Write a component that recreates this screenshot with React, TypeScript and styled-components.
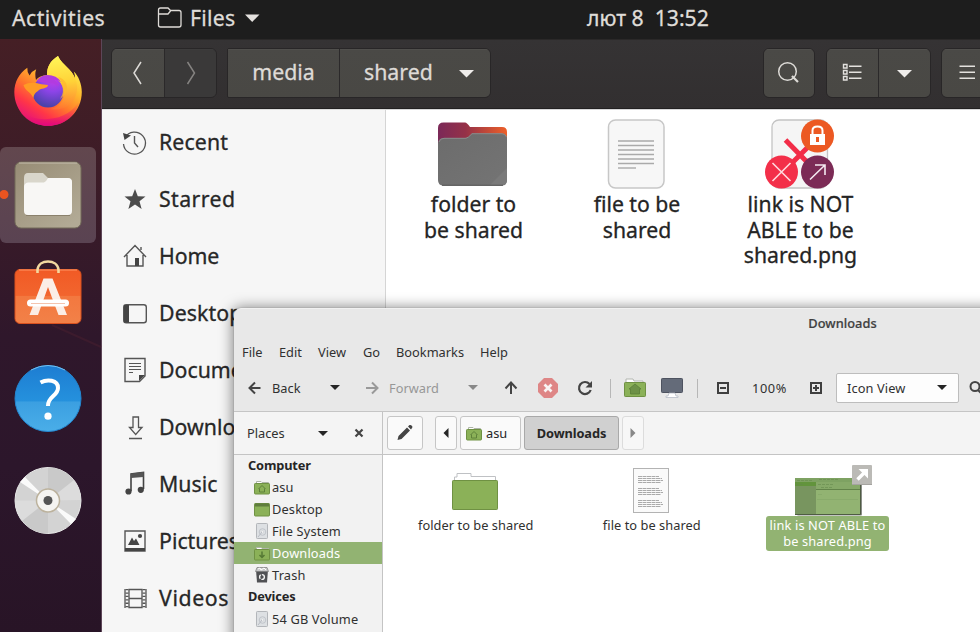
import React from "react";
import styled, { createGlobalStyle } from "styled-components";

const Global = createGlobalStyle`
  * { box-sizing: border-box; }
  body { margin: 0; overflow: hidden; font-family: "Noto Sans", "Open Sans", sans-serif; }
  svg { display: block; flex: none; overflow: visible; }
`;

const Screen = styled.div`
  width: 980px; height: 632px; overflow: hidden; position: relative;
  display: grid; grid-template-rows: 39px 1fr; background: #2b1628;
`;
const TopBar = styled.header`
  background: #1d1d1d; color: #dfdcd8; font-size: 21.2px; line-height: 37px;
  display: grid; grid-template-columns: 145px 33px 53px 344px 1fr; padding-left: 12px;
  white-space: nowrap; -webkit-text-stroke: .3px;
`;
const BarText = styled.span<{ $ls?: number }>`letter-spacing: ${p => p.$ls ?? 0}px; margin-top: -1px;`;
const Body = styled.div`display: grid; grid-template-columns: 102px 1fr; min-height: 0;`;
const Dock = styled.nav`
  display: flex; flex-direction: column; gap: 6px; padding-top: 6px;
  background: linear-gradient(180deg, #451f25 0%, #3d1c27 22%, #2f172b 50%, #2c162b 72%, #281426 100%);
  border-right: 1px solid #5d4658;
`;
const DockItem = styled.div<{ $active?: boolean }>`
  width: 96px; height: 96px; border-radius: 6px;
  background: ${p => (p.$active ? "linear-gradient(#62474e, #5a4352)" : "transparent")};
`;

const Files = styled.section`display: grid; grid-template-rows: 70px 1fr; min-width: 0;`;
const HeaderBar = styled.div`
  background: linear-gradient(#353334, #322f30); border-top: 1px solid #2a2828; border-bottom: 1px solid #222021;
  display: grid; grid-template-columns: 106px 10px 264px 272px 52px 11px 105px 10px 52px;
  padding: 8px 0 0 9px; align-items: start; overflow: hidden; min-width: 0;
`;
const Group = styled.div<{ $cols: string; $at: number; $flat?: boolean }>`
  display: grid; grid-template-columns: ${p => p.$cols}; height: 50px; grid-column: ${p => p.$at};
  border: 1px solid #282627; border-radius: ${p => (p.$flat ? "2px 6px 6px 2px" : "6px")}; overflow: hidden;
`;
const HeaderButton = styled.div<{ $dim?: boolean }>`
  display: flex; align-items: center; justify-content: center;
  background: ${p => (p.$dim ? "#3a3939" : "linear-gradient(#4a4946, #494844)")};
  box-shadow: inset 0 1px ${p => (p.$dim ? "#3d3c3c" : "#504f4c")};
  color: #dedbd7; font-size: 21.3px; line-height: 46px; -webkit-text-stroke: .3px;
  & + & { border-left: 1px solid #2b292a; }
`;
const PathText = styled.span`padding-bottom: 3px;`;
const SharedButton = styled(HeaderButton)`justify-content: space-between; padding: 0 16px 0 24px;`;
const FilesBody = styled.div`display: grid; grid-template-columns: 284px 1fr; min-height: 0;`;
const Places = styled.aside`background: #f6f6f6; border-right: 1px solid #d5d5d5; padding-top: 4px; border-top: 1px solid #ddd;`;
const Place = styled.div`
  height: 57px; display: grid; grid-template-columns: 40px 1fr; padding-left: 17px; align-items: center;
  font-size: 21.3px; line-height: 50px; color: #272727; white-space: nowrap; -webkit-text-stroke: .3px;
`;
const PlaceText = styled.span<{ $ls?: number }>`letter-spacing: ${p => p.$ls ?? 0}px; padding-bottom: 2px;`;
const FileGrid = styled.main`
  background: #fff; display: grid; grid-template-columns: repeat(3, 164px); padding: 5px 0 0 4px; align-items: start;
  border-top: 1px solid #d8d8d8;
`;
const File = styled.figure`margin: 0; display: flex; flex-direction: column; align-items: center;`;
const FileName = styled.figcaption<{ $pad?: number }>`
  font-size: 21.2px; line-height: 25.6px; text-align: center; color: #242424; white-space: pre; margin-top: -2px;
  padding-left: ${p => p.$pad ?? 0}px; -webkit-text-stroke: .3px;
`;

const Win = styled.section`
  position: absolute; left: 234px; top: 308px; width: 1217px; height: 500px; overflow: hidden;
  border-radius: 7px 0 0 0; background: #e8e8e8; box-shadow: 0 1px 14px 1px rgba(0,0,0,.5), 0 0 1px rgba(0,0,0,.5);
  display: grid; grid-template-rows: 30px 28px 45px 43px 1fr; font-size: 12.8px; color: #303030;
  border-top: 1px solid #f1f1f1;
`;
const Title = styled.div`text-align: center; font-weight: 500; line-height: 29px; color: #404040; letter-spacing: .05px; -webkit-text-stroke: .2px;`;
const Menu = styled.div`
  display: grid; grid-template-columns: 37px 39px 45px 33px 84px 50px; padding-left: 8px; line-height: 27px;
`;
const Tools = styled.div`
  display: grid; grid-template-columns: 38px 58px 32px 27px 79px 27px 125px 132px 52px 32px 129px 30px;
  align-items: center; border-bottom: 1px solid #c5c5c5; padding-bottom: 3px;
  & > svg { justify-self: start; }
`;
const ToolText = styled.span<{ $off?: boolean; $ls?: number }>`
  color: ${p => (p.$off ? "#979797" : "#303030")}; letter-spacing: ${p => p.$ls ?? 0}px; padding-top: 1px;
`;
const Select = styled.div`
  width: 123px; height: 30px; background: #fdfdfd; border: 1px solid #bdbdbd; border-radius: 2px;
  display: flex; align-items: center; justify-content: space-between; padding: 0 11px 0 10px;
`;
const PathRow = styled.div`display: grid; grid-template-columns: 149px 1fr; background: #f4f4f4; border-bottom: 1px solid #c4c4c4;`;
const PlacesHead = styled.div`
  border-right: 1px solid #c4c4c4; display: grid; grid-template-columns: 71px 36px 20px; align-items: center; padding-left: 13px;
`;
const Crumbs = styled.div`display: flex; align-items: center; padding-left: 4px;`;
const Crumb = styled.div<{ $w: number; $gap?: number; $kind?: "on" | "off" }>`
  width: ${p => p.$w}px; height: 34px; margin-right: ${p => p.$gap ?? 3}px; border-radius: 3px;
  border: 1px solid ${p => (p.$kind === "on" ? "#a9a9a9" : p.$kind === "off" ? "#dcdcdc" : "#c6c6c6")};
  background: ${p => (p.$kind === "on" ? "#d0d0d0" : p.$kind === "off" ? "#f7f7f7" : "#fafafa")};
  font-weight: ${p => (p.$kind === "on" ? 700 : 400)}; color: #262626; letter-spacing: ${p => (p.$kind === "on" ? -.1 : 0)}px;
  display: flex; align-items: center; justify-content: center; gap: 4px;
`;
const FolderCrumb = styled(Crumb)`justify-content: flex-start; padding-left: 5px;`;
const Panes = styled.div`display: grid; grid-template-columns: 149px 1fr;`;
const Tree = styled.div`background: #f2f2f2; border-right: 1px solid #c4c4c4;`;
const TreeHead = styled.div`
  height: 22px; line-height: 21px; padding-left: 14px; font-weight: 700; color: #252525; letter-spacing: -.15px;
  &:first-child { height: 21px; }
`;
const TreeRow = styled.div<{ $on?: boolean }>`
  height: 22px; line-height: 20px; display: grid; grid-template-columns: 18px 1fr; align-items: center; padding-left: 20px;
  white-space: nowrap; letter-spacing: .15px;
  background: ${p => (p.$on ? "#92b372" : "transparent")}; color: ${p => (p.$on ? "#fff" : "#303030")};
  &:last-child { height: 21px; }
`;
const Canvas = styled.div`background: #fff; display: grid; grid-template-columns: 184px 168px 185px; align-items: start; padding-top: 9px;`;
const Item = styled.figure`margin: 0; display: flex; flex-direction: column; align-items: center;`;
const ItemName = styled.figcaption<{ $on?: boolean }>`
  font-size: 12.8px; line-height: 16.2px; text-align: center; white-space: pre; border-radius: 3px;
  padding: ${p => (p.$on ? "1px 4px 1.6px" : "1px 0 1.6px 1.5px")};
  letter-spacing: ${p => (p.$on ? .14 : .05)}px;
  background: ${p => (p.$on ? "#92b372" : "none")}; color: ${p => (p.$on ? "#fff" : "#303030")};
`;

type G = { x: number; y: number; w: number; h: number; children: React.ReactNode };
/* Drawing area whose origin is given in screen units. */
const Pic = ({ x, y, w, h, children }: G) => (
  <svg width={w} height={h} viewBox={`${x} ${y} ${w} ${h}`} fill="none">{children}</svg>
);
const Down = ({ w = 10, c = "#252525" }: { w?: number; c?: string }) => (
  <svg width={w} height={w / 2} viewBox="0 0 10 5"><path d="M0 0H10L5 5Z" fill={c} /></svg>
);

const Firefox = () => (
  <Pic x={0} y={45} w={96} h={96}>
    <defs>
      <linearGradient id="ffBody" gradientUnits="userSpaceOnUse" x1="70" y1="65" x2="32" y2="124">
        <stop offset="0" stopColor="#fff04c" /><stop offset=".3" stopColor="#ffb92e" /><stop offset=".55" stopColor="#ff7a2b" />
        <stop offset=".78" stopColor="#ff3647" /><stop offset="1" stopColor="#e5117c" />
      </linearGradient>
      <radialGradient id="ffGlobe" gradientUnits="userSpaceOnUse" cx="53" cy="79" r="28">
        <stop offset="0" stopColor="#c93ae6" /><stop offset=".45" stopColor="#8d44e8" /><stop offset="1" stopColor="#4b42a9" />
      </radialGradient>
      <linearGradient id="ffTail" gradientUnits="userSpaceOnUse" x1="60" y1="58" x2="67" y2="112">
        <stop offset="0" stopColor="#fff356" /><stop offset=".45" stopColor="#ffd338" /><stop offset="1" stopColor="#ff7434" stopOpacity=".3" />
      </linearGradient>
      <linearGradient id="ffLow" gradientUnits="userSpaceOnUse" x1="45" y1="102" x2="45" y2="126">
        <stop offset="0" stopColor="#ff3942" stopOpacity="0" /><stop offset="1" stopColor="#e00680" />
      </linearGradient>
    </defs>
    <path d="M27.3 67.7C19 73 14.5 82 14.3 92C14.3 111 29.500 125.800 48 125.800S81.800 111 81.800 92C81.800 84 78.500 76 73.800 71.500Q75.200 75 75 79C72.500 69 62 65 58 56C50 61 47 67 47 75C42.500 75.500 38 77 36 80Q34.500 74 36.200 69.300Q32 71 29.500 75.500Q27 72 27.300 67.700Z" fill="url(#ffBody)" />
    <path d="M16 101C23 117 37 120 48 119C63 118 75 111 80.500 98C77 116 64 125.800 48 125.800S19 116 16 101Z" fill="url(#ffLow)" />
    <path d="M47 75C47 67 50 61 58 56C62 66 76 70 77 86C78 102 65 112 50 109C64 107 69 93 60 83C57 77 52 75 47 75Z" fill="url(#ffTail)" />
    <circle cx="48" cy="92" r="15.500" fill="url(#ffGlobe)" />
    <path d="M61.500 84Q65 92 60 99Q70 92 66 83Q63 78 58 77Q62 81 61.500 84Z" fill="#ffb72d" opacity=".75" />
    <path d="M36.500 81Q41 75 47 75Q57 75 61 82Q58 79.500 54 79.500Q58 83 59 86Q52 82 45 83Z" fill="#b23be0" />
    <path d="M23.500 85Q29 82 36 83Q41 84.500 48 85C48 89 40 88 38 91Q34 93 33.300 98C31 92 25 91 23.500 85Z" fill="#ff9b25" />
  </Pic>
);
const FilesTile = () => (
  <Pic x={0} y={147} w={96} h={96}>
    <circle cx="4" cy="194.500" r="4.500" fill="#e95420" />
    <defs><linearGradient id="tile" x2=".8" y2="1"><stop stopColor="#978c75" /><stop offset="1" stopColor="#b2aa95" /></linearGradient></defs>
    <rect x="15" y="162" width="66" height="66" rx="6" fill="url(#tile)" stroke="#726b59" />
    <path d="M19 163H77" stroke="#c5bdad" />
    <path d="M24 178Q24 173 28 173H43L48 178H67Q72 178 72 183V192H24Z" fill="#d9d6cb" />
    <path d="M24 187Q24 183 28 182.500H44Q46 182 48 178H68Q72 178 72 182V211Q72 215 68 215H28Q24 215 24 211Z" fill="#f8f7f5" />
    <path d="M26 215.500H70" stroke="#8b816c" />
  </Pic>
);
const SoftwareTile = () => (
  <Pic x={0} y={249} w={96} h={96}>
    <defs><linearGradient id="bag" x2="0" y2="1"><stop stopColor="#f15a25" /><stop offset=".48" stopColor="#f2652e" /><stop offset=".5" stopColor="#f3783f" /><stop offset="1" stopColor="#f28148" /></linearGradient></defs>
    <path d="M52 325L101 347" stroke="#4a2030" strokeWidth="2" opacity=".5" />
    <rect x="15" y="269.500" width="66" height="54" rx="5" fill="url(#bag)" stroke="#d9511f" />
    <path d="M19 270H77" stroke="#ff9665" />
    <path d="M37.500 273V270C38 264 43 261.500 48 261.500S58 264 58.500 270V273" stroke="#f3d9a0" strokeWidth="2.600" />
    <path d="M43.500 278.500H52.500L67 315H58.500L48 287L38 315H29.500Z" fill="#fbeee6" />
    <rect x="27" y="299.500" width="42" height="7" rx="3.500" fill="#fff" />
    <path d="M31 303.500H65" stroke="#f4c4ae" />
  </Pic>
);
const HelpTile = () => (
  <Pic x={0} y={351} w={96} h={96}>
    <defs><linearGradient id="help" x2="0" y2="1"><stop stopColor="#1d7dd2" /><stop offset=".54" stopColor="#2591dd" /><stop offset=".55" stopColor="#3b9fe1" /><stop offset="1" stopColor="#4aaee8" /></linearGradient></defs>
    <circle cx="48" cy="398.500" r="33" fill="url(#help)" stroke="#2386d0" />
    <path d="M31 370Q48 361 65 370" stroke="#71bef0" />
    <path d="M40.500 382.500C47 379 58 379.500 58 388C58 396 47.500 396.500 48 406" stroke="#fff" strokeWidth="4" />
    <circle cx="48" cy="416.200" r="3.600" fill="#fff" />
  </Pic>
);
const DiscTile = () => (
  <Pic x={0} y={453} w={96} h={96}>
    <circle cx="48" cy="500.500" r="33" fill="#d3d3d3" stroke="#e7e7e7" />
    <path d="M48 500.500V467.500A33 33 0 0 1 75 482Z M48 500.500V533.500A33 33 0 0 1 21 519Z" fill="#c9c9c9" />
    <path d="M48 500.500L81 500A33 33 0 0 0 74 480Z M48 500.500H15A33 33 0 0 0 22 521Z" fill="#dcdcdc" />
    <path d="M48 500.500L20 482L25 477Z M48 500.500L76 519L71 524Z" fill="#fafafa" />
    <circle cx="48" cy="500.500" r="11.500" fill="#f5f4f1" stroke="#bcb29d" strokeWidth="1.500" />
    <circle cx="48" cy="500.500" r="4.500" fill="#555" />
  </Pic>
);

const placeIcons: Record<string, React.ReactNode> = {
  Recent: <><path d="M125 137.500A11 11 0 1 1 123.500 144" stroke="#555" strokeWidth="1.300" /><path d="M123 133L124.500 140L131 135.500Z" fill="#444" /><path d="M134.500 136V143L138 147" stroke="#555" strokeWidth="1.400" /></>,
  Starred: <path d="M135 189L137.800 196.200L145.500 196.500L139.500 201.300L141.600 209L135 204.600L128.400 209L130.500 201.300L124.500 196.500L132.200 196.200Z" fill="#4c4c4c" />,
  Home: <><path d="M124 257L135 245.500L146 257M127 255V266H143V255M141 250V247" stroke="#555" strokeWidth="1.400" /><path d="M135 258H139V266H135Z" fill="#444" /></>,
  Desktop: <><rect x="123.700" y="304.700" width="22.600" height="18" rx="2.500" stroke="#555" strokeWidth="1.400" /><path d="M124 305H129V322.500H124Z" fill="#444" /></>,
  Documents: <><path d="M125 358.500H145V376L139.500 381.500H125Z" stroke="#555" strokeWidth="1.400" /><path d="M145 375H139V381Z" fill="#444" /><path d="M129 363.500H141M129 366.500H141M129 369.500H141M129 372.500H133" stroke="#555" strokeWidth="1.200" /></>,
  Downloads: <><path d="M133 417H138.500V427.500H142L135.700 434.500L129.500 427.500H133ZM129 438.500H142" stroke="#555" strokeWidth="1.300" /></>,
  Music: <><path d="M131 491V474L143.500 472.500V489" stroke="#444" strokeWidth="1.600" /><path d="M131 473.500L143.500 472V477L131 478Z" fill="#555" /><circle cx="128.500" cy="491.500" r="3.100" fill="#444" /><circle cx="140.800" cy="489.800" r="3.100" fill="#444" /></>,
  Pictures: <><path d="M125 531H145V551H125Z" stroke="#555" strokeWidth="1.400" /><path d="M125 548H145V551H125ZM128 545L132 537.500L134 541L136 538.500L139.500 545Z" fill="#444" /><circle cx="140" cy="536" r="2.100" fill="#444" /></>,
  Videos: <><path d="M129 589.500H142V607.500H129ZM129 598.500H142M125 589V608M146 589V608" stroke="#555" strokeWidth="1.300" /><path d="M127 589V608M144 589V608" stroke="#555" strokeWidth="3" strokeDasharray="1.300 2.100" /></>,
};
const spacing: Record<string, number> = { Recent: .1, Starred: .4, Home: -.1, Desktop: .1, Documents: 0, Downloads: 0, Music: .05, Pictures: 0, Videos: .6 };

const FolderSmall = ({ kind }: { kind: "home" | "down" | "plain" }) => (
  <svg width="16" height="15" viewBox="0 0 16 15" fill="none">
    {kind !== "plain" && <path d="M2.500 4V1.500H7L8 2.500H14.500V4" fill="#fff" stroke="#aeb5a8" />}
    <rect x=".5" y={kind === "plain" ? 1.5 : 3.5} width="15" height={kind === "plain" ? 12.5 : 10.5} rx=".8" fill="#8bb158" stroke="#6f9143" />
    {kind === "plain" && <path d="M1 3H15" stroke="#5f7d3d" strokeWidth="3" />}
    {kind === "home" && <path d="M4.500 9L8 5.500L11.500 9M5.500 8.500V12H10.500V8.500" stroke="#5e813a" />}
    {kind === "down" && <path d="M8 5.500V11M5.500 9L8 11.500L10.500 9" stroke="#557834" strokeWidth="1.500" />}
  </svg>
);
const Drive = () => (
  <svg width="16" height="16" viewBox="0 0 16 16" fill="none">
    <rect x="2.500" y=".5" width="11" height="15" rx=".8" fill="#dde0e3" stroke="#b3b6ba" />
    <circle cx="8.500" cy="9" r="3.300" stroke="#c0c4ca" /><circle cx="8.500" cy="9" r="1.300" fill="#f5f5f5" stroke="#c0c4ca" strokeWidth=".5" /><path d="M4 14L8 9" stroke="#b8bcc3" />
  </svg>
);
const Trash = () => (
  <svg width="16" height="16" viewBox="0 0 16 16" fill="none">
    <path d="M2 3L3 15.500H13L14 3Z" fill="#505154" /><path d="M1.500 4.500L3 .5H13L14.500 4.500Z" fill="#c8c9ca" stroke="#777" strokeWidth=".7" />
    <path d="M4 2L6 1L7 3L10 1L12 3" stroke="#fff" /><circle cx="8" cy="10" r="2.400" stroke="#f3f3f3" strokeWidth="1.400" strokeDasharray="4 1" />
  </svg>
);

const FolderBig = () => (
  <Pic x={433} y={115} w={78} h={78}>
    <defs><linearGradient id="fold"><stop stopColor="#7b2958" /><stop offset=".4" stopColor="#953148" /><stop offset="1" stopColor="#ed6029" /></linearGradient>
      <linearGradient id="foldFront" x2="1" y2="1"><stop stopColor="#6c6c6c" /><stop offset="1" stopColor="#747474" /></linearGradient></defs>
    <path d="M438 128Q438 122.500 443.500 122.500H465Q467 122.500 470 127H502Q507 127 507 132V146H438Z" fill="url(#fold)" />
    <path d="M438 144Q438 138 443.500 138H465Q468 138 472 133.500H502Q507 133.500 507 139V180Q507 185.500 502 185.500H443.500Q438 185.500 438 180Z" fill="url(#foldFront)" />
    <path d="M439 142Q440 138.300 444 138.300H466Q468 138 472 133.700H502Q505 133.700 506.500 137" stroke="#8b8b8b" />
    <path d="M490 185L507 168V180Q507 185 502 185Z" fill="#7a7a7a" /><path d="M442 185.300H503" stroke="#505050" />
  </Pic>
);
const PaperBig = () => (
  <Pic x={597} y={115} w={78} h={78}>
    <rect x="608.500" y="120" width="55.500" height="68" rx="7" fill="#f7f7f7" stroke="#c7c7c7" strokeWidth="1.500" />
    {[141, 145.5, 150, 154.5, 159, 163.5].map(y => <path key={y} d={`M618 ${y}H654`} stroke="#aaa" strokeWidth="1.400" />)}
    <path d="M618 168H636" stroke="#aaa" strokeWidth="1.400" />
  </Pic>
);
const BrokenLink = () => (
  <Pic x={761} y={115} w={78} h={78}>
    <rect x="772" y="120" width="55.500" height="68" rx="7" fill="#f5f5f5" stroke="#c4c4c4" strokeWidth="1.300" />
    <path d="M785.500 140L809 164M809 146L790 165" stroke="#f22d48" strokeWidth="5" />
    <circle cx="817.500" cy="136" r="16.500" fill="#ec5923" /><circle cx="781.500" cy="172" r="16.500" fill="#f32f49" /><circle cx="817.500" cy="172" r="16.500" fill="#7c2b56" />
    <path d="M772.500 163L790.500 181M790.500 163L772.500 181" stroke="#ffd9df" strokeWidth="1.600" />
    <path d="M810 179.500L825 165M815 165H825V175" stroke="#f4e9f0" strokeWidth="1.600" />
    <path d="M812.500 134V130.500Q812.500 126.500 817.500 126.500T822.500 130.500V134" stroke="#fff" strokeWidth="2" />
    <path fillRule="evenodd" d="M810 134H825V145H810ZM816 137V142H819V137Z" fill="#fff" />
  </Pic>
);
const LinkThumb = () => (
  <Pic x={788} y={464} w={80} h={52}>
    <rect x="797" y="480" width="65" height="35.500" rx="1" fill="#3c4237" opacity=".6" />
    <rect x="795" y="478" width="65" height="36" fill="#92b372" />
    <path d="M795 478H860V482H795Z" fill="#7ea262" />
    <path d="M816 482H860V489H816Z" fill="#86a968" />
    <path d="M795 482H816V514H795Z" fill="#78955f" />
    <path d="M795 482H816V486H795Z" fill="#62943c" />
    <path d="M816 489.500H860" stroke="#628349" />
    <path d="M819 479.500H838M796 484.500H803M797 480.500H812M818 484.500H833M821 487.500H832" stroke="#65894b" strokeDasharray="3 1" strokeWidth=".8" opacity=".7" />
    <path d="M818 494.500H822M817 499.500H858" stroke="#7ea262" strokeWidth=".7" opacity=".6" />
    <path d="M860.500 479V514.500H795" stroke="#4f5c43" />
    <rect x="852" y="465" width="20" height="20" rx="1" fill="#bbbab6" />
    <path d="M852 484.500H872" stroke="#a5a4a0" />
    <path d="M857.500 479.500L866 471" stroke="#fff" strokeWidth="3.400" /><path d="M858.500 469H868V478.500L864.500 475L861.500 472Z" fill="#fff" />
  </Pic>
);

export default function App() {
  return (
    <Screen>
      <Global />
      <TopBar>
        <BarText $ls={0.5}>Activities</BarText>
        <Pic x={157} y={0} w={26} h={39}>
          <path d="M158.500 25V10Q158.500 8 160.500 8H168L170.500 10.500H179Q181 10.500 181 12.500V25Q181 27 179 27H160.500Q158.500 27 158.500 25ZM158.500 14H168L170.500 11" stroke="#dfdcd8" strokeWidth="1.300" />
        </Pic>
        <BarText $ls={0.25}>Files</BarText>
        <Pic x={243} y={0} w={18} h={39}><path d="M245 14.500H259.500L252.200 22Z" fill="#e5e2df" /></Pic>
        <BarText>лют 8&nbsp; 13:52</BarText>
      </TopBar>
      <Body>
        <Dock>
          <DockItem><Firefox /></DockItem>
          <DockItem $active><FilesTile /></DockItem>
          <DockItem><SoftwareTile /></DockItem>
          <DockItem><HelpTile /></DockItem>
          <DockItem><DiscTile /></DockItem>
        </Dock>
        <Files>
          <HeaderBar>
            <Group $at={1} $cols="52px 1fr">
              <HeaderButton><Pic x={131} y={60} w={14} h={26}><path d="M141 62L134 73L141 84" stroke="#dcdad6" strokeWidth="1.500" /></Pic></HeaderButton>
              <HeaderButton $dim><Pic x={184} y={60} w={14} h={26}><path d="M187.500 62L194.500 73L187.500 84" stroke="#858381" strokeWidth="1.500" /></Pic></HeaderButton>
            </Group>
            <Group $at={3} $cols="111px 1fr" $flat>
              <HeaderButton><PathText>media</PathText></HeaderButton>
              <SharedButton><PathText>shared</PathText><Pic x={459} y={66} w={15} h={15}><path d="M459 70H474L466.500 77.500Z" fill="#efedeb" /></Pic></SharedButton>
            </Group>
            <Group $at={5} $cols="1fr">
              <HeaderButton>
                <Pic x={777} y={61} w={25} h={25}>
                  <circle cx="787.500" cy="71.500" r="8.800" stroke="#dcdad6" strokeWidth="1.500" />
                  <path d="M792 76L798 82" stroke="#dcdad6" strokeWidth="2.200" />
                </Pic>
              </HeaderButton>
            </Group>
            <Group $at={7} $cols="51px 1fr">
              <HeaderButton>
                <Pic x={842} y={62} w={22} h={22}>
                  <path d="M843.500 64.500H847V68H843.500ZM843.500 70.500H847V74H843.500ZM843.500 76.500H847V80H843.500Z" stroke="#e3e1de" strokeWidth="1.400" />
                  <path d="M849 66.300H861.500M849 72.300H861.500M849 78.300H861.500" stroke="#e3e1de" strokeWidth="1.500" />
                </Pic>
              </HeaderButton>
              <HeaderButton><Pic x={897} y={66} w={15} h={15}><path d="M897 70H912L904.500 77.500Z" fill="#efedeb" /></Pic></HeaderButton>
            </Group>
            <Group $at={9} $cols="1fr">
              <HeaderButton><Pic x={959} y={62} w={16} h={22}><path d="M959.500 66.300H975M959.500 72.300H975M959.500 78.300H975" stroke="#e3e1de" strokeWidth="1.500" /></Pic></HeaderButton>
            </Group>
          </HeaderBar>
          <FilesBody>
            <Places>
              {Object.keys(placeIcons).map((name, i) => (
                <Place key={name}>
                  <Pic x={119} y={114 + i * 57} w={32} h={57}>{placeIcons[name]}</Pic>
                  <PlaceText $ls={spacing[name]}>{name}</PlaceText>
                </Place>
              ))}
            </Places>
            <FileGrid>
              <File><FolderBig /><FileName $pad={3}>{"folder to\nbe shared"}</FileName></File>
              <File><PaperBig /><FileName $pad={2}>{"file to be\nshared"}</FileName></File>
              <File><BrokenLink /><FileName $pad={1}>{"link is NOT\nABLE to be\nshared.png"}</FileName></File>
            </FileGrid>
          </FilesBody>
        </Files>
      </Body>
      <Downloads />
    </Screen>
  );
}

const Downloads = () => (
  <Win>
    <Title>Downloads</Title>
    <Menu>{["File", "Edit", "View", "Go", "Bookmarks", "Help"].map(t => <span key={t}>{t}</span>)}</Menu>
    <Tools>
      <Pic x={234} y={378} w={38} h={20}><path d="M260.500 388H250M255 382.500L249.500 388L255 393.500" stroke="#444" strokeWidth="2" /></Pic>
      <ToolText>Back</ToolText>
      <Down />
      <Pic x={362} y={378} w={26} h={20}><path d="M366 388H377M372 382.500L377.500 388L372 393.500" stroke="#999" strokeWidth="2" /></Pic>
      <ToolText $off>Forward</ToolText>
      <Down c="#888" />
      <Pic x={495} y={373} w={110} h={30}>
        <path d="M511 394V383M505.500 388.500L511 382.500L516.500 388.500" stroke="#444" strokeWidth="2" />
        <path d="M544 378H552L558 384V392L552 398H544L538 392V384Z" fill="#de8686" />
        <path d="M544.500 384.500L551.500 391.500M551.500 384.500L544.500 391.500" stroke="#f9f3f3" strokeWidth="2.700" />
        <path d="M589.500 384A6 6 0 1 0 590.700 390" stroke="#444" strokeWidth="2.200" /><path d="M592 381V387.500H585.500Z" fill="#444" />
      </Pic>
      <Pic x={620} y={373} w={112} h={30}>
        <path d="M610.500 379V398M697.500 379V398" stroke="#b7b7b7" />
        <path d="M626 383V379H633L634 381H643V383" fill="#fff" stroke="#b3b6b0" />
        <rect x="624.500" y="382.500" width="21" height="14" rx=".8" fill="#8bb158" stroke="#6f9143" />
        <path d="M629 389L635 384L641 389H639.500V394H630.500V389Z" fill="#6d9147" stroke="#5b7d39" strokeWidth=".8" />
        <rect x="661.500" y="378.500" width="21" height="14" rx=".8" fill="#646b79" stroke="#4e5360" />
        <path d="M669 393H675L676 396H678V397.500H666V396H668Z" fill="#fff" stroke="#b8bcc8" strokeWidth=".8" />
        <path d="M718 383H728V393H718ZM720 388H726" stroke="#3f3f3f" strokeWidth="2" />
      </Pic>
      <ToolText $ls={.6}>100%</ToolText>
      <Pic x={804} y={373} w={30} h={30}><path d="M811 383H821V393H811ZM813 388H819M816 385V391" stroke="#3f3f3f" strokeWidth="2" /></Pic>
      <Select><ToolText $ls={.1}>Icon View</ToolText><Down /></Select>
      <Pic x={965} y={373} w={25} h={30}><circle cx="975" cy="386.500" r="4.500" stroke="#444" strokeWidth="2" /><path d="M978 390L983 395" stroke="#444" strokeWidth="2.200" /></Pic>
    </Tools>
    <PathRow>
      <PlacesHead><span>Places</span><Down />
        <Pic x={354} y={428} w={10} h={10}><path d="M355.500 429.500L362.500 436.500M362.500 429.500L355.500 436.500" stroke="#444" strokeWidth="2.200" /></Pic>
      </PlacesHead>
      <Crumbs>
        <Crumb $w={36} $gap={12}><Pic x={397} y={426} w={16} h={16}><path d="M397.500 441L398.500 437L407 428.500L410 431.500L401.500 440ZM408 427.500L409.500 426Q411 425.500 412 427Q413 428 412 429L411 430.500Z" fill="#444" /></Pic></Crumb>
        <Crumb $w={22}><svg width="6" height="10"><path d="M5.500 0V10L.5 5Z" fill="#252525" /></svg></Crumb>
        <FolderCrumb $w={61}><FolderSmall kind="home" />asu</FolderCrumb>
        <Crumb $w={95} $kind="on">Downloads</Crumb>
        <Crumb $w={22} $kind="off"><svg width="6" height="10"><path d="M.5 0V10L5.500 5Z" fill="#888" /></svg></Crumb>
      </Crumbs>
    </PathRow>
    <Panes>
      <Tree>
        <TreeHead>Computer</TreeHead>
        <TreeRow><FolderSmall kind="home" />asu</TreeRow>
        <TreeRow><FolderSmall kind="plain" />Desktop</TreeRow>
        <TreeRow><Drive />File System</TreeRow>
        <TreeRow $on><FolderSmall kind="down" />Downloads</TreeRow>
        <TreeRow><Trash />Trash</TreeRow>
        <TreeHead>Devices</TreeHead>
        <TreeRow><Drive />54 GB Volume</TreeRow>
      </Tree>
      <Canvas>
        <Item>
          <Pic x={450} y={464} w={50} h={52}>
            <path d="M454.500 482V477H457V473.500H471V476.500H495.500V482" fill="#fff" stroke="#bfc1c4" />
            <rect x="452.500" y="480.500" width="45" height="29" rx=".8" fill="#8bb158" stroke="#6f9143" />
          </Pic>
          <ItemName>folder to be shared</ItemName>
        </Item>
        <Item>
          <Pic x={626} y={464} w={50} h={52}>
            <rect x="633.500" y="468.500" width="35" height="44" fill="#fafafa" stroke="#b3b3b3" />
            {[476.5, 478.5, 480.5, 482.5, 488.5, 490.5, 492.5, 494.5, 500.5, 502.5, 504.5, 506.5].map((y, i) => (
              <path key={y} d={`M638 ${y}H${[659, 662, 663, 661][i % 4]}`} stroke="#aaa" strokeDasharray="4 .5" />
            ))}
          </Pic>
          <ItemName>file to be shared</ItemName>
        </Item>
        <Item>
          <LinkThumb />
          <ItemName $on>{"link is NOT ABLE to\nbe shared.png"}</ItemName>
        </Item>
      </Canvas>
    </Panes>
  </Win>
);
